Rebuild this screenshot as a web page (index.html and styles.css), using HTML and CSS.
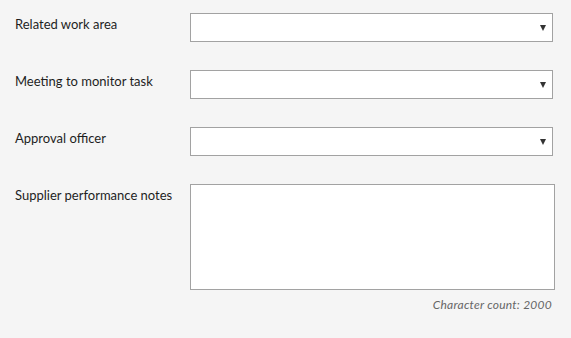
FILE: index.html
```html
<!DOCTYPE html>
<html lang="en">
<head>
    <meta charset="UTF-8">
    <title>Supplier form</title>
    <link rel="stylesheet" href="styles.css">
</head>
<body>
    <div class="form">
        <!--下拉框-->
        <div class="row">
            <label class="label">Related work area</label>
            <div class="select"><select></select></div>
        </div>
        <div class="row">
            <label class="label">Meeting to monitor task</label>
            <div class="select"><select></select></div>
        </div>
        <div class="row">
            <label class="label">Approval officer</label>
            <div class="select"><select></select></div>
        </div>
        <!--备注-->
        <div class="row">
            <label class="label">Supplier performance notes</label>
            <div class="notes">
                <textarea></textarea>
                <div class="count">Character count: 2000</div>
            </div>
        </div>
    </div>
</body>
</html>
```
FILE: styles.css
```css
*{
    padding: 0;
    margin: 0;
    box-sizing: border-box;
}
body{
    background-color: #f5f5f5;
    font-family: Lato, "Open Sans", sans-serif;
    color: #1e1e1e;
}
.form{
    padding: 13px 0 0 15px;
}
.row{
    display: grid;
    grid-template-columns: 175px 1fr;
    margin-bottom: 28px;
}
.row .label{
    padding-top: 3px;
    font-size: 13px;
    line-height: 16px;
}
.select{
    position: relative;
    width: 363px;
    height: 29px;
}
.select select{
    display: block;
    width: 100%;
    height: 100%;
    border: 1px solid #a2a2a2;
    border-radius: 0;
    background-color: #fff;
    appearance: none;
    -webkit-appearance: none;
}
.select::after{
    content: "";
    position: absolute;
    top: 12px;
    right: 7px;
    border-left: 3px solid transparent;
    border-right: 3px solid transparent;
    border-top: 6px solid #333;
}
.notes{
    width: 365px;
}
.notes textarea{
    display: block;
    width: 100%;
    height: 106px;
    border: 1px solid #a2a2a2;
    border-radius: 0;
    background-color: #fff;
    resize: none;
}
.notes .count{
    margin-top: 7px;
    padding-right: 3px;
    text-align: right;
    font-size: 12px;
    font-style: italic;
    letter-spacing: 0.25px;
    color: #666;
}
```
